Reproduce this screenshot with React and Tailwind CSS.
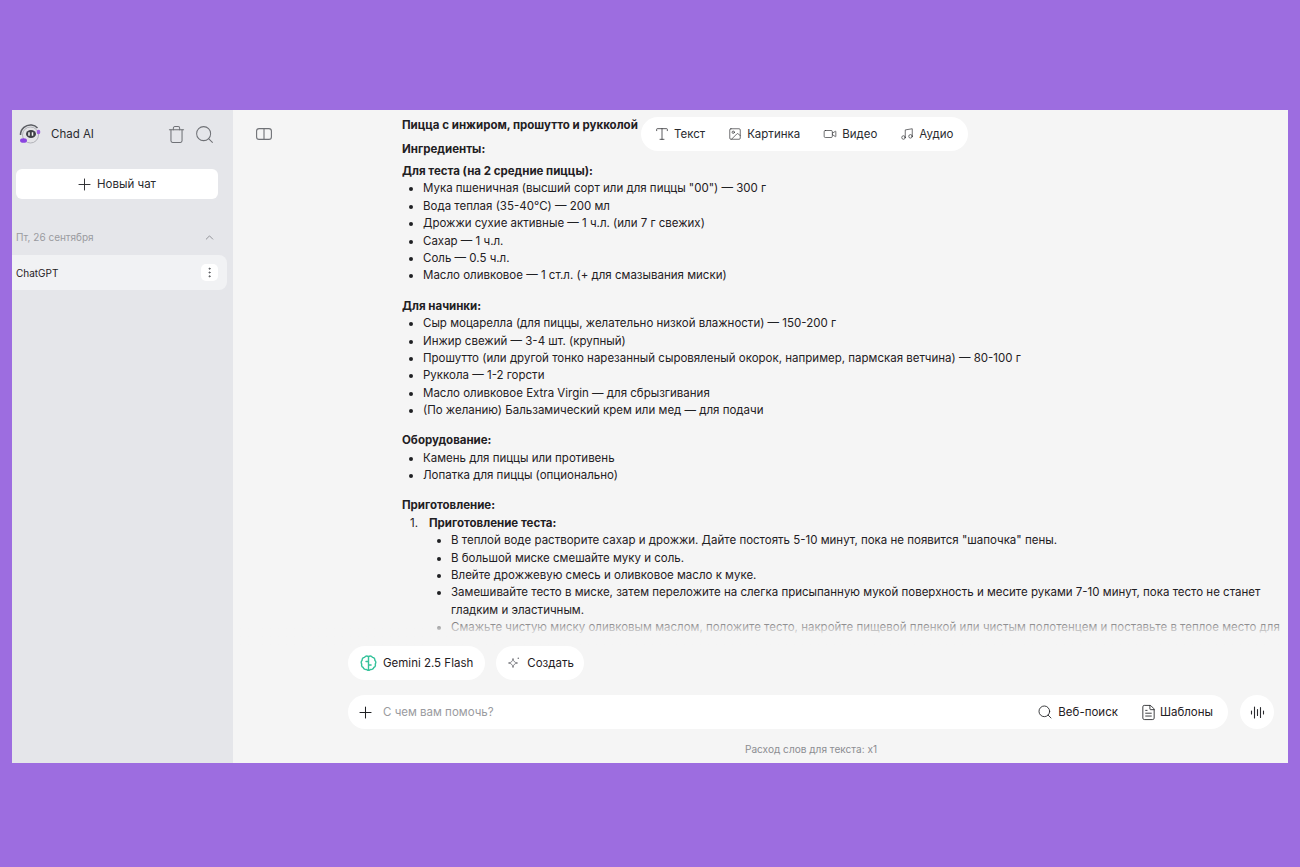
import React from "react";
import { ChevronUp, EllipsisVertical, FileText, Image, Music, Plus, Search, Trash, Type, Video } from "lucide-react";

const tabs = [
  { icon: Type, label: "Текст", iconClass: "size-[16px]" },
  { icon: Image, label: "Картинка", iconClass: "mx-px size-[14px]" },
  { icon: Video, label: "Видео", iconClass: "mx-px size-[14px]" },
  { icon: Music, label: "Аудио", iconClass: "mx-px size-[14px]" },
];

const dough = [
  'Мука пшеничная (высший сорт или для пиццы "00") — 300 г',
  "Вода теплая (35-40°C) — 200 мл",
  "Дрожжи сухие активные — 1 ч.л. (или 7 г свежих)",
  "Сахар — 1 ч.л.",
  "Соль — 0.5 ч.л.",
  "Масло оливковое — 1 ст.л. (+ для смазывания миски)",
];

const filling = [
  "Сыр моцарелла (для пиццы, желательно низкой влажности) — 150-200 г",
  "Инжир свежий — 3-4 шт. (крупный)",
  "Прошутто (или другой тонко нарезанный сыровяленый окорок, например, пармская ветчина) — 80-100 г",
  "Руккола — 1-2 горсти",
  "Масло оливковое Extra Virgin — для сбрызгивания",
  "(По желанию) Бальзамический крем или мед — для подачи",
];

const tools = ["Камень для пиццы или противень", "Лопатка для пиццы (опционально)"];

const steps = [
  'В теплой воде растворите сахар и дрожжи. Дайте постоять 5-10 минут, пока не появится "шапочка" пены.',
  "В большой миске смешайте муку и соль.",
  "Влейте дрожжевую смесь и оливковое масло к муке.",
  "Замешивайте тесто в миске, затем переложите на слегка присыпанную мукой поверхность и месите руками 7-10 минут, пока тесто не станет гладким и эластичным.",
  "Смажьте чистую миску оливковым маслом, положите тесто, накройте пищевой пленкой или чистым полотенцем и поставьте в теплое место для подхода на 1-1.5 часа.",
];

function Bullets({ items }) {
  return (
    <ul className="list-disc pl-[21px]">
      {items.map((item) => (
        <li key={item}>{item}</li>
      ))}
    </ul>
  );
}

function ChadLogo() {
  return (
    <svg width="24" height="24" viewBox="0 0 24 24" fill="none">
      <path d="M2.500 13C2.500 6.500 8 2.500 13.500 3c2.500.2 4.500 1.300 6 3" stroke="#5b5d63" strokeWidth="1.500" />
      <circle cx="12.500" cy="13" r="8" fill="#e4e4e7" stroke="#a5a6ac" strokeWidth="0.800" />
      <ellipse cx="13" cy="12" rx="5" ry="4" fill="#3f4046" />
      <path d="M11 10.300v3.400M14.500 10.300v3.400" stroke="#f5f5f5" strokeWidth="1.500" />
      <ellipse cx="20.500" cy="10" rx="1.800" ry="2.200" fill="#9d5fe0" />
      <ellipse cx="5.500" cy="18.500" rx="3.500" ry="2.300" fill="#8b45e0" />
    </svg>
  );
}

function PanelToggle() {
  return (
    <svg width="16" height="12" viewBox="0 0 16 12" fill="none" stroke="#6f7176" strokeWidth="1.100">
      <rect x="0.600" y="0.600" width="14.800" height="10.800" rx="2.500" />
      <path d="M8 .6v10.800" />
    </svg>
  );
}

function GeminiMark() {
  return (
    <svg width="17" height="17" viewBox="0 0 17 17" fill="none" stroke="#35c29b" strokeWidth="1.400" strokeLinecap="round" strokeLinejoin="round">
      <path d="M8.500 1.500C7 .8 5.300 1.200 4.500 2.400 3 2.500 2 3.800 2.200 5.200 1 6.200 .9 8 1.800 9c-.5 1.400.1 2.900 1.400 3.500.4 1.500 2 2.400 3.400 2 .7.800 1.500.9 1.900.4.400.5 1.200.4 1.900-.4 1.400.4 3-.5 3.400-2 1.300-.6 1.900-2.100 1.400-3.500.9-1 .8-2.800-.4-3.800.2-1.400-.8-2.700-2.300-2.800-.8-1.200-2.500-1.600-4-.9z" />
      <path d="M8.500 2v13M8.500 6.500H6M8.500 10h2.600" />
    </svg>
  );
}

function StarMark() {
  return (
    <svg width="14" height="14" viewBox="0 0 14 14" fill="none" stroke="#6f7176" strokeWidth="0.900" strokeLinejoin="round">
      <path d="M6 2.500C6.400 5.300 7.700 6.600 10.500 7 7.700 7.400 6.400 8.700 6 11.500 5.600 8.700 4.300 7.400 1.500 7 4.300 6.600 5.600 5.300 6 2.500z" />
      <circle cx="11.300" cy="2.300" r="0.800" fill="#6f7176" stroke="none" />
    </svg>
  );
}

function VoiceMark() {
  return (
    <svg width="15" height="15" viewBox="0 0 15 15" fill="none" stroke="#2a2b2f" strokeWidth="1.100" strokeLinecap="round">
      <path d="M1.500 6v3M4.500 2v11M7.500 4.500v6M10.500 2.500v10M13.500 6v3" />
    </svg>
  );
}

export default function App() {
  return (
    <div className="h-[867px] bg-[#9d6de0] px-3 pt-[110px] pb-[104px] font-['Inter',sans-serif] text-[#1f2023]">
      <div className="flex h-[653px] bg-[#f5f5f5]">
        <aside className="flex w-[221px] shrink-0 flex-col bg-[#e5e6ea]">
          <div className="flex h-12 items-center pl-[6px] pr-[18px]">
            <ChadLogo />
            <span className="ml-[9px] pt-[2px] text-[11.500px] text-[#2a2b2f]">Chad AI</span>
            <Trash className="ml-auto size-[19px] text-[#6f7176]" strokeWidth={1.300} />
            <Search className="ml-[8px] size-[21px] text-[#6f7176]" strokeWidth={1.150} />
          </div>
          <div className="mt-[11px] px-1">
            <button className="flex h-[30px] w-[202px] items-center justify-center gap-[3px] rounded-[6px] bg-white pr-[3px] text-[11.500px] text-[#2a2b2f]">
              <Plus className="size-[19px]" strokeWidth={1.200} />
              <span className="pt-[2px]">Новый чат</span>
            </button>
          </div>
          <div className="mt-[28px] flex h-[20px] items-center justify-between pl-1 pr-[17px] text-[10px] text-[#9a9ba0]">
            <span>Пт, 26 сентября</span>
            <ChevronUp className="size-[13px] text-[#85878c]" strokeWidth={1.600} />
          </div>
          <div className="mt-[8px] flex h-[35px] w-[215px] items-center justify-between rounded-r-[8px] bg-[#f1f2f4] pl-1 pr-[9px] text-[10px]">
            <span className="pt-[2px]">ChatGPT</span>
            <span className="flex size-[17px] items-center justify-center rounded-[5px] bg-white">
              <EllipsisVertical className="size-[13px] text-[#55575c]" strokeWidth={1.800} />
            </span>
          </div>
        </aside>

        <main className="relative flex min-w-0 flex-1 flex-col">
          <div className="absolute left-[408px] top-[7px] z-10 flex h-[34px] items-center gap-[22px] rounded-full bg-white pl-[13px] pr-[15px] text-[11.500px] text-[#2a2b2f]">
            {tabs.map(({ icon: Icon, label, iconClass }) => (
              <span key={label} className="flex items-center gap-[4px]">
                <Icon className={iconClass} strokeWidth={1.150} />
                <span className="pt-[2px]">{label}</span>
              </span>
            ))}
          </div>

          <div className="relative flex min-h-0 flex-1">
            <div className="w-[169px] shrink-0 pl-[23px] pt-[18px]">
              <PanelToggle />
            </div>
            <div className="min-w-0 flex-1 overflow-hidden pr-[8px] pt-[7px] text-[11.500px] leading-[17.400px]">
              <p className="font-bold">Пицца с инжиром, прошутто и рукколой</p>
              <p className="mt-[6.600px] font-bold">Ингредиенты:</p>
              <p className="mt-[4.500px] font-bold">Для теста (на 2 средние пиццы):</p>
              <Bullets items={dough} />
              <p className="mt-[13px] font-bold">Для начинки:</p>
              <Bullets items={filling} />
              <p className="mt-[12.500px] font-bold">Оборудование:</p>
              <Bullets items={tools} />
              <p className="mt-[13px] font-bold">Приготовление:</p>
              <div className="flex">
                <span className="w-[27px] pl-[8px]">1.</span>
                <span className="font-bold">Приготовление теста:</span>
              </div>
              <ul className="list-disc pl-[49px]">
                {steps.map((step) => (
                  <li key={step}>{step}</li>
                ))}
              </ul>
            </div>
            <div className="absolute inset-x-0 bottom-0 h-[34px] bg-gradient-to-b from-[#f5f5f5]/0 via-[#f5f5f5] via-[70%] to-[#f5f5f5]" />
          </div>

          <div className="h-[117px] shrink-0 pl-[115px] pr-[14px]">
            <div className="flex gap-[11px]">
              <div className="flex h-[34px] items-center gap-[6px] rounded-full bg-white px-[12px] text-[11.500px]">
                <GeminiMark />
                <span className="pt-[2px]">Gemini 2.5 Flash</span>
              </div>
              <div className="flex h-[34px] items-center gap-[6px] rounded-full bg-white pl-[11px] pr-[10px] text-[11.500px]">
                <StarMark />
                <span className="pt-[2px]">Создать</span>
              </div>
            </div>
            <div className="mt-[15px] flex gap-[12px]">
              <div className="flex h-[34px] flex-1 items-center rounded-full bg-white pl-[8px] pr-[15px] text-[11.500px]">
                <Plus className="size-[19px]" strokeWidth={1.300} />
                <span className="ml-[8px] pt-[2px] text-[#9a9ba0]">С чем вам помочь?</span>
                <span className="ml-auto flex items-center gap-[5px]">
                  <Search className="size-[16px]" strokeWidth={1.300} />
                  <span className="pt-[2px]">Веб-поиск</span>
                </span>
                <span className="ml-[22px] flex items-center gap-[3px]">
                  <FileText className="size-[17px]" strokeWidth={1.200} />
                  <span className="pt-[2px]">Шаблоны</span>
                </span>
              </div>
              <div className="flex size-[34px] items-center justify-center rounded-full bg-white">
                <VoiceMark />
              </div>
            </div>
            <p className="mt-[13px] text-center text-[10.100px] text-[#8c8d92]">Расход слов для текста: x1</p>
          </div>
        </main>
      </div>
    </div>
  );
}
